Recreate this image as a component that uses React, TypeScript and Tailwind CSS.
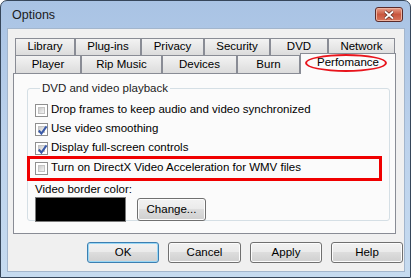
import React from "react";

const ROW1 = [
  { label: "Library", w: 60 },
  { label: "Plug-ins", w: 66 },
  { label: "Privacy", w: 63 },
  { label: "Security", w: 66 },
  { label: "DVD", w: 58 },
  { label: "Network", w: 67 },
];

const ROW2 = [
  { label: "Player", w: 66 },
  { label: "Rip Music", w: 81 },
  { label: "Devices", w: 75 },
  { label: "Burn", w: 63 },
];

const OPTIONS = [
  { label: "Drop frames to keep audio and video synchronized", checked: false },
  { label: "Use video smoothing", checked: true },
  { label: "Display full-screen controls", checked: true },
];

function Checkbox({ checked }: { checked: boolean }) {
  return (
    <div className="w-[13px] h-[13px] shrink-0 border border-[#8f8f8f] bg-white p-[2px]">
      <div className="relative w-full h-full border border-[#c4c4c4] bg-gradient-to-br from-[#cbcbcb] to-[#f4f4f4]">
        {checked && (
          <svg viewBox="0 0 9 9" className="absolute -left-[2px] -top-[2px] w-[11px] h-[11px]">
            <path d="M1.5 4.5 L3.6 7 L7.8 1.2" fill="none" stroke="#3a5aa8" strokeWidth="1.7" />
          </svg>
        )}
      </div>
    </div>
  );
}

function Btn({ label, def, w }: { label: string; def?: boolean; w: string }) {
  return (
    <div
      className={`${w} flex items-center justify-center rounded-[3px] border ${
        def ? "border-[#3c7fb1] shadow-[inset_0_0_0_1px_#99d7f5]" : "border-[#707070] shadow-[inset_0_0_0_1px_#fcfcfc]"
      } bg-[linear-gradient(#f2f2f2_0%,#ebebeb_45%,#dddddd_50%,#cfcfcf_100%)] text-black`}
    >
      {label}
    </div>
  );
}

export default function App() {
  return (
    <div className="w-[413px] h-[279px] bg-white font-['Liberation_Sans',sans-serif] text-[11.5px] leading-none">
      <div className="w-[411px] h-[278px] rounded-t-[7px] border border-[#36465a] bg-gradient-to-b from-[#a9c3e4] via-[#bcd2ec] to-[#c6dbf0] flex flex-col">
        {/* title bar */}
        <div className="h-[27px] flex items-center pl-[11px] pr-[7px]">
          <span className="text-[12.5px] text-[#1b1b1b] flex-1 pt-[2px]">Options</span>
          <div className="w-[28px] h-[15px] rounded-[3px] border border-[#5a2b2b] bg-gradient-to-b from-[#e8a08c] via-[#c8563e] to-[#d9755c] flex items-center justify-center shadow-[inset_0_0_0_1px_#eeb3a0]">
            <svg viewBox="0 0 12 10" className="w-[12px] h-[10px]">
              <path d="M2 1.5 L10 8.5 M10 1.5 L2 8.5" stroke="#5b2a22" strokeWidth="3.2" />
              <path d="M2 1.5 L10 8.5 M10 1.5 L2 8.5" stroke="#ffffff" strokeWidth="1.8" />
            </svg>
          </div>
        </div>

        {/* client area */}
        <div className="ml-[6px] mr-[5px] h-[244px] bg-[#f0f0f0] border border-[#a3b6cd] pl-[5px] pt-[9px] flex flex-col">
          {/* tabs */}
          <div className="ml-[2px] flex flex-col">
            <div className="flex h-[17px]">
              {ROW1.map((t) => (
                <div
                  key={t.label}
                  style={{ width: t.w }}
                  className="h-full border border-b-0 border-[#898c95] bg-gradient-to-b from-[#f3f3f3] to-[#dcdcdc] flex items-center justify-center"
                >
                  {t.label}
                </div>
              ))}
            </div>
            <div className="flex h-[18px] items-end">
              {ROW2.map((t) => (
                <div
                  key={t.label}
                  style={{ width: t.w }}
                  className="h-full border border-b-0 border-[#898c95] bg-gradient-to-b from-[#f3f3f3] to-[#dcdcdc] flex items-center justify-center"
                >
                  {t.label}
                </div>
              ))}
              <div className="relative z-10 w-[96px] h-[21px] -mb-px border border-b-0 border-[#898c95] bg-[#fbfbfb] flex items-center justify-center pb-[2px]">
                Perfomance
                <div className="absolute left-[4px] top-[0px] w-[82px] h-[18px] rounded-[50%] border-2 border-[#e8141c]" />
              </div>
            </div>
          </div>

          {/* tab page */}
          <div className="w-[383px] h-[161px] border border-[#898c95] bg-[#fbfbfb] pl-[13px] pr-[6px] pt-[9px]">
            <fieldset className="h-[138px] border border-[#d5dfe5] rounded-[3px] px-[7px] pt-[9px]">
              <legend className="ml-[5px] px-[2px] text-[#1b1b1b]">DVD and video playback</legend>
              <div className="flex flex-col gap-[6px]">
                {OPTIONS.map((o) => (
                  <div key={o.label} className="flex items-center gap-[3px] h-[13px]">
                    <Checkbox checked={o.checked} />
                    <span>{o.label}</span>
                  </div>
                ))}
              </div>
              <div className="-ml-[8px] mt-[1px] w-[355px] h-[25px] border-[3px] border-[#f00000] flex items-center gap-[3px] pl-[5px]">
                <Checkbox checked={false} />
                <span>Turn on DirectX Video Acceleration for WMV files</span>
              </div>
              <div className="mt-[3px]">Video border color:</div>
              <div className="mt-[2px] flex items-center gap-[11px]">
                <div className="w-[91px] h-[25px] bg-black border border-[#7a7a7a]" />
                <Btn label="Change..." w="w-[69px] h-[23px]" />
              </div>
            </fieldset>
          </div>

          {/* buttons */}
          <div className="mt-[8px] ml-[74px] flex gap-[9px]">
            <Btn label="OK" def w="w-[72px] h-[21px]" />
            <Btn label="Cancel" w="w-[73px] h-[21px]" />
            <Btn label="Apply" w="w-[72px] h-[21px]" />
            <Btn label="Help" w="w-[72px] h-[21px]" />
          </div>
        </div>
      </div>
    </div>
  );
}
